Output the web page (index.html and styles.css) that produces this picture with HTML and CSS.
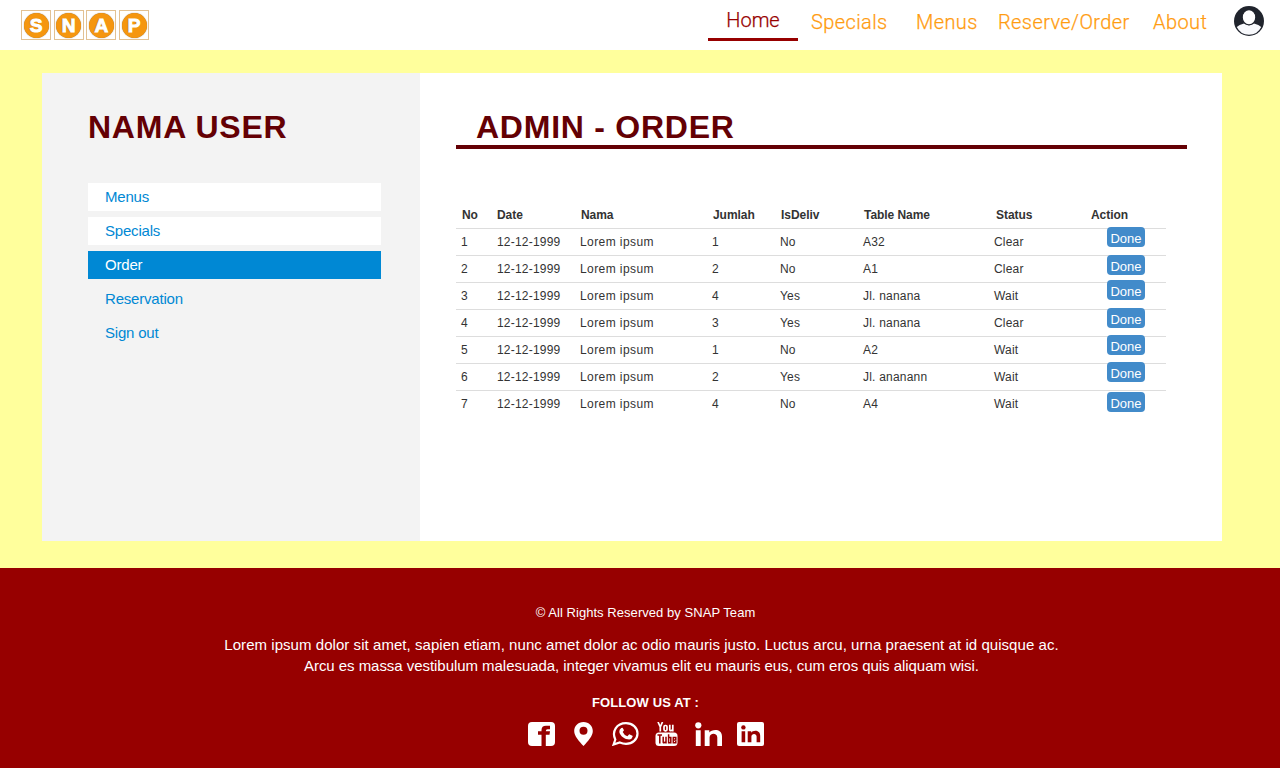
FILE: index.html
```html
<!DOCTYPE html>
<html lang="id">
<head>
<meta charset="utf-8">
<title>SNAP - Admin Order</title>
<link rel="stylesheet" href="styles.css">
</head>
<body>
<header class="topbar">
  <div class="logo"><span class="tile"><b>S</b></span><span class="tile"><b>N</b></span><span class="tile"><b>A</b></span><span class="tile"><b>P</b></span></div>
  <nav class="nav">
    <a class="home">Home</a><a class="n-specials">Specials</a><a class="n-menus">Menus</a><a class="n-reserve">Reserve/Order</a><a class="n-about">About</a>
  </nav>
  <svg class="avatar" viewBox="0 0 30 30"><circle cx="15" cy="15" r="15" fill="#20242d"/><path d="M2.800 21Q5 18.500 10 17.500Q15 21 20 17.500Q25 18.500 27.200 21A13.500 13.500 0 0 1 2.800 21Z" fill="#f8f9fc"/><ellipse cx="15" cy="11.300" rx="6.800" ry="7.600" fill="#fff" stroke="#20242d" stroke-width="1.200"/></svg>
</header>
<main class="main">
  <div class="card">
    <aside class="side">
      <h1>NAMA USER</h1>
      <ul>
        <li class="box">Menus</li><li class="box">Specials</li><li class="active">Order</li><li>Reservation</li><li>Sign out</li>
      </ul>
    </aside>
    <section class="content">
      <h1 class="title">ADMIN - ORDER</h1>
      <div class="table">
        <div class="row head"><span>No</span><span>Date</span><span>Nama</span><span>Jumlah</span><span>IsDeliv</span><span>Table Name</span><span>Status</span><span>Action</span></div>
        <div class="row"><span>1</span><span class="date">12-12-1999</span><span class="name">Lorem ipsum</span><span>1</span><span>No</span><span>A32</span><span>Clear</span><button class="up2">Done</button></div>
        <div class="row"><span>2</span><span class="date">12-12-1999</span><span class="name">Lorem ipsum</span><span>2</span><span>No</span><span>A1</span><span>Clear</span><button class="up1">Done</button></div>
        <div class="row"><span>3</span><span class="date">12-12-1999</span><span class="name">Lorem ipsum</span><span>4</span><span>Yes</span><span>Jl. nanana</span><span>Wait</span><button class="up3">Done</button></div>
        <div class="row"><span>4</span><span class="date">12-12-1999</span><span class="name">Lorem ipsum</span><span>3</span><span>Yes</span><span>Jl. nanana</span><span>Clear</span><button class="up2">Done</button></div>
        <div class="row"><span>5</span><span class="date">12-12-1999</span><span class="name">Lorem ipsum</span><span>1</span><span>No</span><span>A2</span><span>Wait</span><button class="up2">Done</button></div>
        <div class="row"><span>6</span><span class="date">12-12-1999</span><span class="name">Lorem ipsum</span><span>2</span><span>Yes</span><span>Jl. ananann</span><span>Wait</span><button class="up2">Done</button></div>
        <div class="row"><span>7</span><span class="date">12-12-1999</span><span class="name">Lorem ipsum</span><span>4</span><span>No</span><span>A4</span><span>Wait</span><button class="down1">Done</button></div>
      </div>
    </section>
  </div>
</main>
<footer class="footer">
  <p class="copy">© All Rights Reserved by SNAP Team</p>
  <p class="lorem"><span class="l1">Lorem ipsum dolor sit amet, sapien etiam, nunc amet dolor ac odio mauris justo. Luctus arcu, urna praesent at id quisque ac.</span><span class="l2">Arcu es massa vestibulum malesuada, integer vivamus elit eu mauris eus, cum eros quis aliquam wisi.</span></p>
  <p class="follow">FOLLOW US AT :</p>
  <div class="social">
    <svg viewBox="0 0 27 24"><rect width="27" height="24" rx="4" fill="#fff"/><path fill="#970000" d="M13.500 24V12.800H10V9.200H13.500V8Q13.500 3.700 18 3.700H22V7.300H19.500Q17.800 7.300 17.800 9.200H22L21.500 12.800H17.800V24Z"/></svg>
    <svg viewBox="0 0 27 24"><path fill="#fff" fill-rule="evenodd" d="M13.500 0C8 0 4.200 4 4.200 9C4.200 14 9 19 13.500 24C18 19 22.800 14 22.800 9C22.800 4 19 0 13.500 0ZM13.500 4.800A4 4 0 1 1 13.500 12.800A4 4 0 0 1 13.500 4.800Z"/></svg>
    <svg viewBox="0 0 27 24"><path fill="none" stroke="#fff" stroke-width="2.200" d="M1.600 22.500L3.300 17.500C-.5 9.500 4.500 1.200 14 1.200C20.500 1.200 25.500 5.700 25.500 11.500C25.500 17.300 20.500 21.800 14 21.800C11.500 21.800 9.500 21.200 7.800 20.500Z"/><path fill="#fff" d="M9.300 6Q7 7.500 7.300 10C8 14 13 17.500 17.200 17.500Q20 17.300 20.700 14.500L20.500 13.700L17.200 12.200L15.400 14.200Q12 13 10.700 10L12 8.300L10.600 5.800Z"/></svg>
    <svg viewBox="0 0 27 24"><g fill="none" stroke="#fff" stroke-width="1.700"><path d="M5 0L7.300 5V9.500M9.500 0L7.300 5"/><rect x="11" y="3.500" width="3" height="5.300" rx="1.200"/><path d="M16.800 2.700V7.500Q16.800 9 18 8.700Q19.300 8.500 19.800 7.500M19.800 2.700V9.600"/></g><rect x="2.500" y="10.500" width="22" height="13.500" rx="3.500" fill="#fff"/><g fill="none" stroke="#970000" stroke-width="1.500"><path d="M4.500 13H9M6.800 13V21.500M10.200 14.800V20Q10.200 21 11 20.800L12.800 20M13 14.800V21.500M15.600 12.300V21.500M15.600 15.500H17.800V20.700H15.600M22.800 19V20.700H20.300V15.500H22.800V18H20.300"/></g></svg>
    <svg viewBox="0 0 27 24"><g fill="#fff"><circle cx="3.300" cy="3.300" r="3.100"/><path d="M.8 8.300H5.700V24H.8ZM9.700 8.300H14.300V10.400C16.500 7.300 27 6 27 14.500V24H22.300V15.500C22.300 10.600 14.600 10.700 14.600 15.500V24H9.700Z"/></g></svg>
    <svg viewBox="0 0 27 24"><rect width="27" height="24" rx="2" fill="#fff"/><g fill="#970000"><circle cx="6.400" cy="5.400" r="2.200"/><path d="M4.600 9.200H8.200V20.300H4.600ZM10.700 9.200H14.200V10.700C16 8 23.200 7.600 23.200 13.800V20.300H19.600V14.600C19.600 11 14.400 11.200 14.400 14.600V20.300H10.700Z"/></g></svg>
  </div>
</footer>
</body>
</html>
```
FILE: styles.css
```css
* { box-sizing: border-box; margin: 0; padding: 0; }
body { width: 1280px; height: 768px; overflow: hidden; font-family: "Liberation Sans", Arial, sans-serif; background: #ffff9c; }
.topbar { display: flex; height: 50px; background: #fff; padding-left: 21px; }
.logo { display: flex; gap: 2.7px; margin-top: 10px; width: 687px; }
.tile { display: flex; align-items: center; justify-content: center; width: 30px; height: 30px; border: 1px solid #e2c193; background: #fff; }
.tile b { width: 25px; height: 25px; border-radius: 50%; background: #f5960f; box-shadow: 0 0 1px #7a5520; color: #fff; font: 900 19px/26px "Liberation Sans", sans-serif; text-align: center; -webkit-text-stroke: 1px #fff; text-shadow: -1px 0 1px #a06a10; }
.nav { display: flex; width: 526px; font: 300 20px/24px Roboto, sans-serif; color: #ff9c10; white-space: nowrap; -webkit-text-stroke: .25px currentColor; }
.nav a { padding-top: 10px; }
.nav .home { width: 90px; height: 41px; padding-top: 8px; text-align: center; color: #970000; border-bottom: 3px solid #970000; }
.n-specials { width: 105px; margin-left: 13px; letter-spacing: .4px; }
.n-menus { width: 82px; letter-spacing: .4px; }
.n-reserve { width: 155px; letter-spacing: .4px; }
.n-about { letter-spacing: .4px; }
.avatar { width: 30px; height: 30px; margin-top: 6px; }
.main { height: 518px; padding: 23px 58px 0 42px; }
.card { display: flex; height: 468px; background: #fff; }
.side { width: 378px; background: #f3f3f3; padding: 36px 39px 0 46px; }
h1 { font-size: 32px; line-height: 36px; letter-spacing: .75px; color: #640004; white-space: nowrap; }
.side ul { display: flex; flex-direction: column; gap: 6px; margin-top: 38px; list-style: none; }
.side li { height: 28px; padding-left: 17px; font-size: 15px; line-height: 28px; letter-spacing: -.2px; color: #0088d4; }
.side .box { background: #fff; }
.side .active { background: #0088d4; color: #fff; }
.content { flex: 1; padding: 36px 35px 0 36px; }
.title { height: 40px; padding-left: 20px; border-bottom: 4px solid #640004; }
.table { width: 710px; margin-top: 53px; font-size: 12px; line-height: 27px; letter-spacing: .2px; color: #333; }
.row { display: grid; grid-template-columns: 36px 83px 132px 68px 83px 131px 113px 1fr; align-items: start; height: 27px; padding-left: 5px; border-top: 1px solid #ddd; white-space: nowrap; }
.row.head { grid-template-columns: 35px 84px 132px 68px 83px 132px 95px 1fr; height: 26px; padding-left: 6px; border-top: 0; font-weight: bold; letter-spacing: -.05px; }
.date { letter-spacing: .2px; }
.name { letter-spacing: .42px; }
button { width: 38px; height: 20px; border: 0; border-radius: 4px; background: #428bca; color: #fff; font: 13px/23px "Liberation Sans", sans-serif; letter-spacing: 0; }
.up1 { margin-top: -1px; }
.up2 { margin-top: -2px; }
.up3 { margin-top: -3px; }
.down1 { margin-top: 1px; }
.footer { display: flex; flex-direction: column; align-items: center; height: 200px; padding-top: 35px; background: #970000; color: #fff; white-space: nowrap; }
.copy { padding-left: 11px; font-size: 13px; line-height: 20px; letter-spacing: .05px; }
.lorem { display: flex; flex-direction: column; align-items: center; padding-left: 3px; margin-top: 11px; font-size: 15px; line-height: 21px; }
.l1 { letter-spacing: .052px; }
.l2 { letter-spacing: -.045px; }
.follow { margin-top: 17px; padding-left: 11px; font-size: 13px; line-height: 20px; font-weight: bold; letter-spacing: .12px; }
.social { display: flex; gap: 14.8px; margin-top: 9px; padding-left: 12px; }
.social svg { width: 27px; height: 24px; }
```
